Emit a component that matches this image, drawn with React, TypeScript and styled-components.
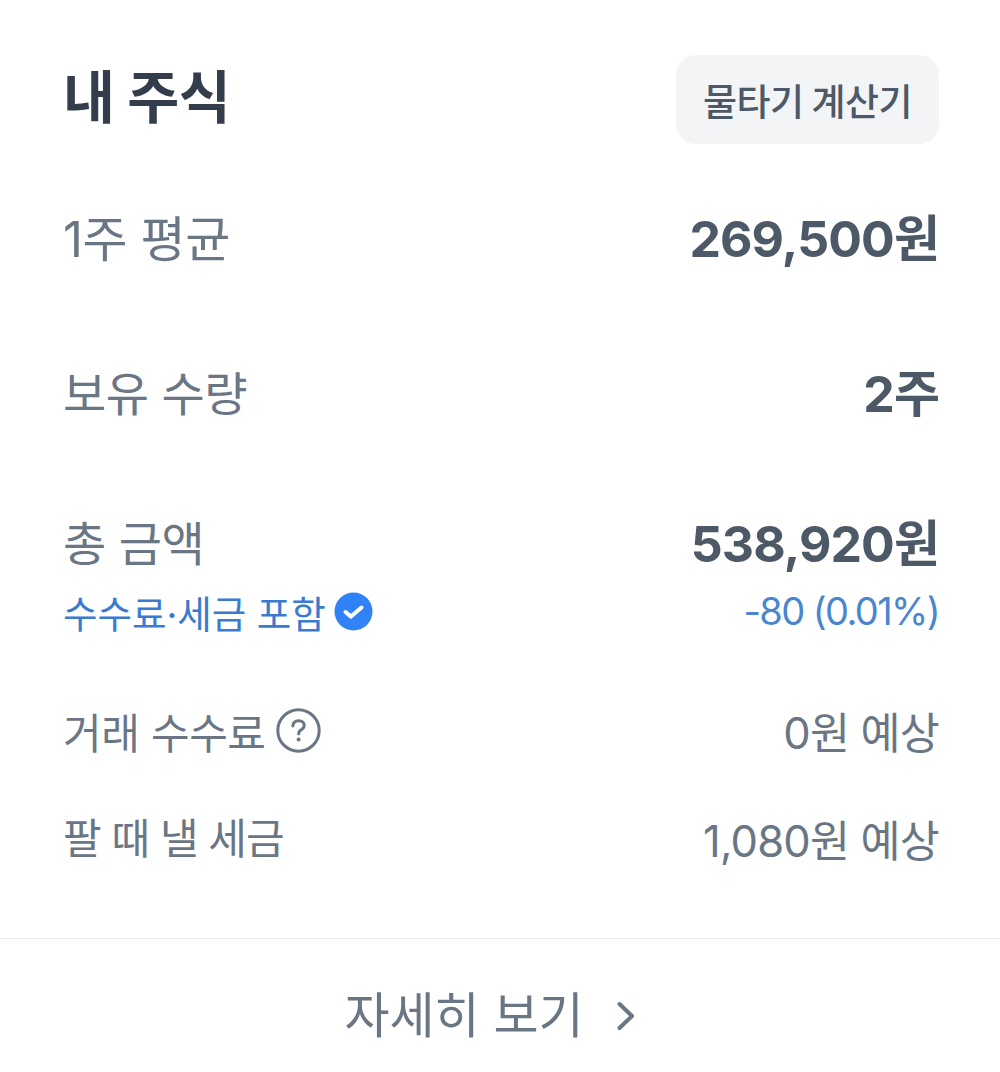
import React from "react";
import styled, { createGlobalStyle } from "styled-components";

const Global = createGlobalStyle`
  html, body { margin: 0; padding: 0; background: #fff; }
  body { font-family: Inter, "Noto Sans CJK KR", sans-serif; }
`;

const Page = styled.div`
  width: 1000px;
  height: 1072px;
  display: flex;
  flex-direction: column;
  background: #fff;
  overflow: hidden;
`;

const Body = styled.div`
  padding: 55px 61px 0 63px;
  height: 938px;
  flex: none;
  box-sizing: border-box;
  display: flex;
  flex-direction: column;
`;

const Header = styled.div`
  display: flex;
  justify-content: space-between;
  align-items: flex-start;
  height: 89px;
`;

const Title = styled.h1`
  margin: 0;
  font-size: 56.5px;
  line-height: 86px;
  font-weight: 700;
  color: #333d4b;
  letter-spacing: -0.5px;
`;

const CalcButton = styled.button`
  width: 263px;
  height: 89px;
  border: 0;
  border-radius: 20px;
  background: #f2f4f6;
  color: #4e5968;
  font-family: inherit;
  font-size: 37px;
  font-weight: 500;
  letter-spacing: -0.5px;
  word-spacing: -1.5px;
  padding: 0;
`;

const Row = styled.div<{ $height: number; $mt: number }>`
  display: flex;
  justify-content: space-between;
  align-items: center;
  height: ${(p) => p.$height}px;
  margin-top: ${(p) => p.$mt}px;
`;

const Label = styled.span<{ $size: number; $tracking?: number; $raise?: number }>`
  display: inline-flex;
  align-items: center;
  gap: 10px;
  font-size: ${(p) => p.$size}px;
  font-weight: 400;
  color: #6b7684;
  letter-spacing: ${(p) => p.$tracking ?? -0.4}px;
  padding-bottom: ${(p) => p.$raise ?? 0}px;
`;

const Value = styled.span`
  font-size: 50px;
  font-weight: 700;
  color: #4e5968;
  letter-spacing: -0.9px;
`;

const SmallValue = styled.span`
  font-size: 43.5px;
  font-weight: 400;
  color: #6b7684;
  letter-spacing: -0.8px;
`;

const BlueLabel = styled.span`
  display: inline-flex;
  align-items: center;
  gap: 8px;
  font-size: 37.5px;
  font-weight: 400;
  color: #3a7bd0;
`;

const BlueValue = styled.span`
  font-size: 38px;
  font-weight: 400;
  color: #4a86cf;
  letter-spacing: -1.6px;
`;

const Footer = styled.div`
  border-top: 1px solid #e9ebee;
  flex: 1;
  display: flex;
  justify-content: center;
  align-items: center;
  gap: 32px;
  padding-top: 20px;
  padding-right: 20px;
  color: #6b7684;
  font-size: 49px;
  font-weight: 400;
`;

const FooterLabel = styled.span`
  line-height: 1;
`;

const CheckBadge = () => (
  <svg width="39" height="39" viewBox="0 0 39 39" aria-hidden="true">
    <circle cx="19.5" cy="19.5" r="19" fill="#3182f6" />
    <path d="M11.5 20l5.5 4.6 10.5-9" fill="none" stroke="#fff" strokeWidth="4" strokeLinecap="round" strokeLinejoin="round" />
  </svg>
);

const HelpIcon = () => (
  <svg width="45" height="45" viewBox="0 0 45 45" aria-hidden="true">
    <circle cx="22.5" cy="22.5" r="20.7" fill="none" stroke="#6b7684" strokeWidth="3" />
    <path d="M16.8 18c.3-3.4 2.7-5.3 5.8-5.3 3.2 0 5.6 1.9 5.6 4.8 0 2-1 3.1-2.9 4.3-1.8 1.1-2.6 2-2.6 4" fill="none" stroke="#6b7684" strokeWidth="3" strokeLinecap="round" />
    <circle cx="22.6" cy="31.5" r="2" fill="#6b7684" />
  </svg>
);

const Chevron = () => (
  <svg width="20" height="32" viewBox="0 0 20 32" aria-hidden="true">
    <path d="M3.5 4l12.5 12-12.5 12" fill="none" stroke="#6b7684" strokeWidth="4" strokeLinecap="round" strokeLinejoin="round" />
  </svg>
);

export default function App() {
  return (
    <Page>
      <Global />
      <Body>
        <Header>
          <Title>내 주식</Title>
          <CalcButton>물타기 계산기</CalcButton>
        </Header>
        <Row $height={70} $mt={56}>
          <Label $size={49}>1주 평균</Label>
          <Value>269,500원</Value>
        </Row>
        <Row $height={70} $mt={85}>
          <Label $size={47}>보유 수량</Label>
          <Value>2주</Value>
        </Row>
        <Row $height={70} $mt={80}>
          <Label $size={47}>총 금액</Label>
          <Value>538,920원</Value>
        </Row>
        <Row $height={50} $mt={11}>
          <BlueLabel>
            수수료·세금 포함
            <CheckBadge />
          </BlueLabel>
          <BlueValue>-80 (0.01%)</BlueValue>
        </Row>
        <Row $height={60} $mt={64}>
          <Label $size={42}>
            거래 수수료
            <HelpIcon />
          </Label>
          <SmallValue>0원 예상</SmallValue>
        </Row>
        <Row $height={60} $mt={48}>
          <Label $size={42} $tracking={-1} $raise={6}>
            팔 때 낼 세금
          </Label>
          <SmallValue>1,080원 예상</SmallValue>
        </Row>
      </Body>
      <Footer>
        <FooterLabel>자세히 보기</FooterLabel>
        <Chevron />
      </Footer>
    </Page>
  );
}
